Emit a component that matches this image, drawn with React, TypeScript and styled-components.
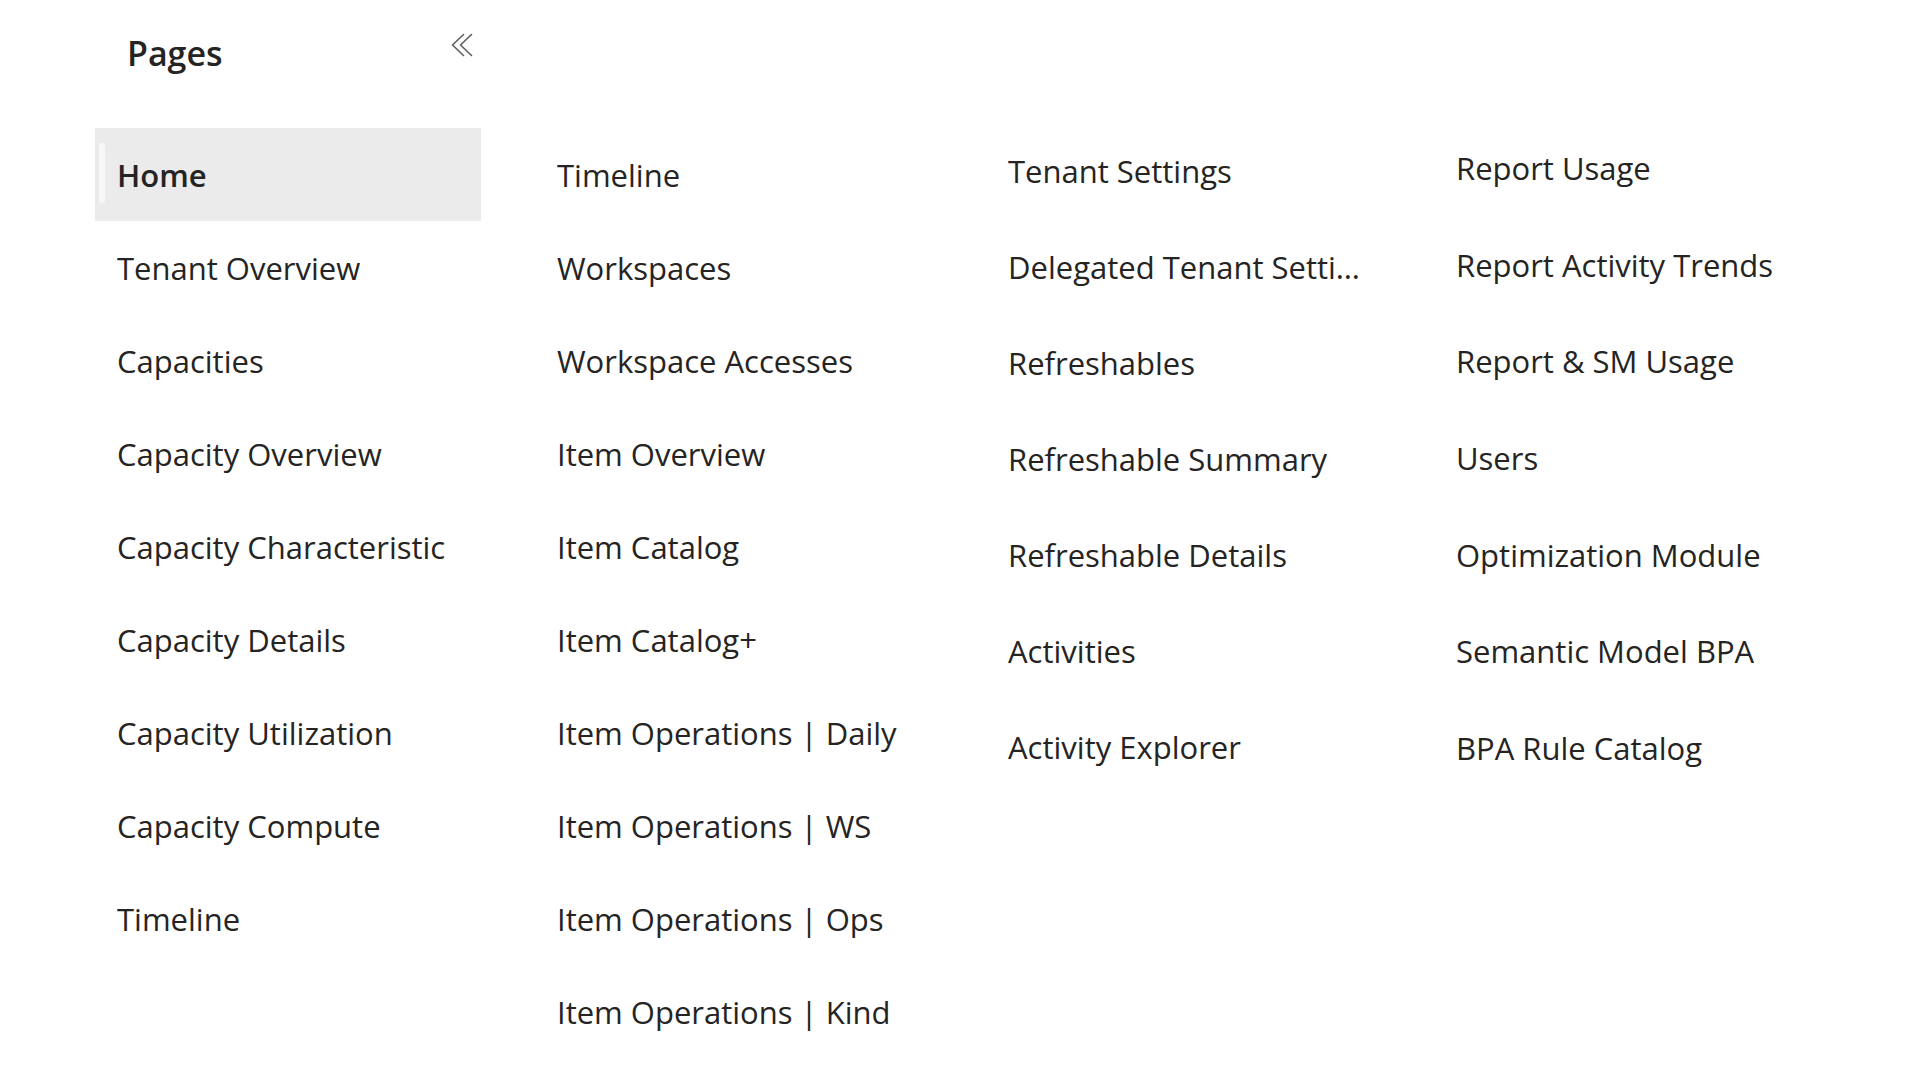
import styled, { createGlobalStyle } from "styled-components";

const GlobalStyle = createGlobalStyle`
  html, body {
    margin: 0;
    background: #ffffff;
  }
  body {
    font-family: "Open Sans", "Noto Sans", "Liberation Sans", sans-serif;
    color: #252423;
  }
`;

const Page = styled.div`
  width: 1920px;
  height: 1080px;
  box-sizing: border-box;
  padding: 30px 0 0 95px;
  overflow: hidden;
`;

const Header = styled.header`
  width: 386px;
  box-sizing: border-box;
  padding: 0 8px 0 32px;
  display: flex;
  justify-content: space-between;
  align-items: flex-start;
`;

const Title = styled.h1`
  margin: 0;
  font-size: 34px;
  font-weight: 600;
  line-height: normal;
`;

const CollapseButton = styled.button`
  display: flex;
  width: 22px;
  height: 24px;
  margin-top: 3px;
  padding: 0;
  border: 0;
  background: none;
  color: #605e5c;
  cursor: pointer;
`;

const Columns = styled.nav`
  margin-top: 45px;
  display: grid;
  grid-template-columns: 386px 397px 394px 420px;
  column-gap: 54px;
  align-items: start;
`;

const Column = styled.ul<{ $shift: number }>`
  list-style: none;
  margin: ${(p) => p.$shift}px 0 0;
  padding: 0;
  display: flex;
  flex-direction: column;
`;

const Item = styled.li<{ $height: number; $active?: boolean }>`
  position: relative;
  height: ${(p) => p.$height}px;
  box-sizing: border-box;
  padding: 0 8px 0 22px;
  display: flex;
  align-items: center;
  font-size: 31px;
  font-weight: ${(p) => (p.$active ? 600 : 400)};
  background: ${(p) => (p.$active ? "#ebebeb" : "transparent")};
  cursor: pointer;

  &::before {
    content: "";
    display: ${(p) => (p.$active ? "block" : "none")};
    position: absolute;
    left: 4px;
    top: 15px;
    width: 6px;
    height: 60px;
    border-radius: 3px;
    background: #f8f8f8;
  }
`;

const Label = styled.span`
  min-width: 0;
  white-space: nowrap;
  overflow: hidden;
  text-overflow: ellipsis;
`;

const DoubleChevron = () => (
  <svg width="22" height="24" viewBox="0 0 22 24" fill="none" stroke="currentColor" strokeWidth="1.6" strokeLinecap="round" strokeLinejoin="round">
    <polyline points="12.5,1.5 1.5,12 12.5,22.5" />
    <polyline points="20.5,1.5 9.5,12 20.5,22.5" />
  </svg>
);

type PageColumn = { shift: number; rowHeight: number; pages: string[] };

const columns: PageColumn[] = [
  {
    shift: 7,
    rowHeight: 93,
    pages: [
      "Home",
      "Tenant Overview",
      "Capacities",
      "Capacity Overview",
      "Capacity Characteristic",
      "Capacity Details",
      "Capacity Utilization",
      "Capacity Compute",
      "Timeline",
    ],
  },
  {
    shift: 7,
    rowHeight: 93,
    pages: [
      "Timeline",
      "Workspaces",
      "Workspace Accesses",
      "Item Overview",
      "Item Catalog",
      "Item Catalog+",
      "Item Operations | Daily",
      "Item Operations | WS",
      "Item Operations | Ops",
      "Item Operations | Kind",
    ],
  },
  {
    shift: 2,
    rowHeight: 96,
    pages: [
      "Tenant Settings",
      "Delegated Tenant Settings",
      "Refreshables",
      "Refreshable Summary",
      "Refreshable Details",
      "Activities",
      "Activity Explorer",
    ],
  },
  {
    shift: -1,
    rowHeight: 96.6,
    pages: [
      "Report Usage",
      "Report Activity Trends",
      "Report & SM Usage",
      "Users",
      "Optimization Module",
      "Semantic Model BPA",
      "BPA Rule Catalog",
    ],
  },
];

const App = () => {
  return (
    <>
      <GlobalStyle />
      <Page>
        <Header>
          <Title>Pages</Title>
          <CollapseButton aria-label="Collapse">
            <DoubleChevron />
          </CollapseButton>
        </Header>
        <Columns>
          {columns.map((col, ci) => (
            <Column key={ci} $shift={col.shift}>
              {col.pages.map((page, pi) => (
                <Item key={page + pi} $height={col.rowHeight} $active={ci === 0 && pi === 0}>
                  <Label>{page}</Label>
                </Item>
              ))}
            </Column>
          ))}
        </Columns>
      </Page>
    </>
  );
};

export default App;
